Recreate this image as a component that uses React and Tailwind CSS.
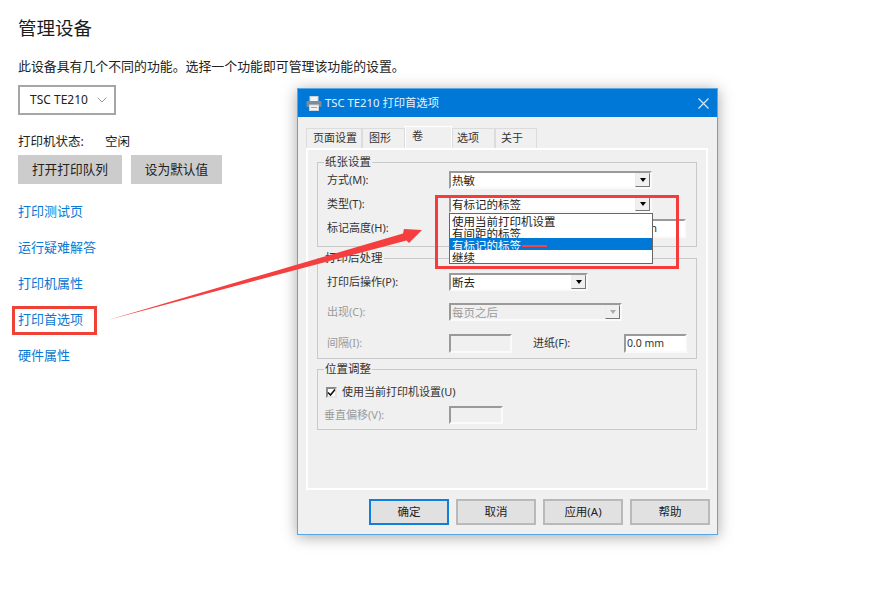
import { ChevronDown } from "lucide-react";

const font = "font-['Noto_Sans','Noto_Sans_CJK_SC',sans-serif]";

const links = ["打印测试页", "运行疑难解答", "打印机属性", "打印首选项", "硬件属性"];

const tabs = [
  { label: "页面设置", w: "w-[56px] pl-[6px]" },
  { label: "图形", w: "w-[43px] pl-[6px]" },
  { label: "卷", w: "w-[47px] pl-[6px]", active: true },
  { label: "选项", w: "w-[43px] pl-[4px]" },
  { label: "关于", w: "w-[42px] pl-[5px]" },
];

function PrinterIcon() {
  return (
    <svg width="16" height="15" viewBox="0 0 16 15">
      <rect x="4" y="0.5" width="8" height="5" fill="#f4f4f4" stroke="#c8d4de" />
      <rect x="0.5" y="5" width="15" height="6" rx="1" fill="#7f8c98" />
      <rect x="3.5" y="9" width="9" height="5.5" fill="#f4f4f4" stroke="#c8d4de" />
      <rect x="5" y="11" width="6" height="1" fill="#9aa7b3" />
    </svg>
  );
}

function Sunken({ className, children }) {
  return (
    <div className={`border-2 border-t-[#9a9a9a] border-l-[#9a9a9a] border-r-[#fafafa] border-b-[#fafafa] ${className}`}>
      {children}
    </div>
  );
}

function Combo({ value, className, disabled }) {
  return (
    <Sunken className={`flex h-[18px] items-center ${disabled ? "bg-[#f0f0f0] text-[#9b9b9b]" : "bg-white text-[#222]"} ${className}`}>
      <span className="flex-1 pl-[1px] pt-[2px] text-[11.5px] leading-none">{value}</span>
      <span className="flex h-[14px] w-[15px] items-center justify-center border border-b-[#777] border-r-[#777] border-t-[#ececec] border-l-[#ececec] bg-[#f0f0f0]">
        <span className={`h-0 w-0 border-x-[3.5px] border-t-[4px] border-x-transparent ${disabled ? "border-t-[#aaa]" : "border-t-black"}`} />
      </span>
    </Sunken>
  );
}

function Row({ label, muted, children, className }) {
  return (
    <div className={`flex items-center ${className}`}>
      <span className={`w-[122px] text-[11px] ${muted ? "text-[#9b9b9b]" : "text-[#333]"}`}>{label}</span>
      {children}
    </div>
  );
}

function Group({ title, className, children }) {
  return (
    <div className={`relative border border-[#c9c9c9] pl-[9px] ${className}`}>
      <span className="absolute -top-[9px] left-[6px] bg-[#f0f0f0] px-[1px] text-[11.5px] leading-[16px] text-[#333]">
        {title}
      </span>
      {children}
    </div>
  );
}

function DialogButton({ children, primary }) {
  return (
    <button className={`h-[26px] w-[80px] bg-[#e1e1e1] text-[11.5px] text-[#222] ${primary ? "border-2 border-[#0f7fdb]" : "border-2 border-[#b9b9b9]"}`}>
      {children}
    </button>
  );
}

function PrintDialog() {
  return (
    <div className="absolute left-[297px] top-[88px] flex h-[447px] w-[421px] flex-col border border-[#5aa7e6] bg-[#f0f0f0] shadow-[0_2px_14px_rgba(0,0,0,0.35)]">
      <div className="flex h-[28px] items-center bg-[#0078d7] pl-[8px] pr-[8px] text-white">
        <PrinterIcon />
        <span className="ml-[3px] flex-1 text-[11.3px] text-[#e8f3fc]">TSC TE210 打印首选项</span>
        <svg width="11" height="11" viewBox="0 0 11 11" stroke="#d5e9f9" strokeWidth="1.2">
          <path d="M0.5 0.5 L10.5 10.5 M10.5 0.5 L0.5 10.5" />
        </svg>
      </div>

      <div className="pl-[8px] pr-[9px] pt-[9px]">
        <div className="flex h-[22px] items-end">
          {tabs.map((t) => (
            <div
              key={t.label}
              className={`flex items-center border border-b-0 text-[11px] text-[#333] ${t.w} ${
                t.active ? "h-[22px] border-white bg-[#f0f0f0] pb-[3px]" : "h-[20px] border-[#dcdcdc] bg-[#f0f0f0]"
              }`}
            >
              {t.label}
            </div>
          ))}
        </div>

        <div className="h-[342px] border-2 border-white px-[9px] pt-[12px]">
          <Group title="纸张设置" className="h-[85px] pt-[8px]">
            <Row label="方式(M):">
              <Combo value="热敏" className="w-[203px]" />
            </Row>
            <Row label="类型(T):" className="mt-[6px]">
              <Combo value="有标记的标签" className="w-[203px]" />
            </Row>
            <Row label="标记高度(H):" className="mt-[6px]">
              <Sunken className="flex h-[19px] w-[237px] items-center justify-end bg-white pr-[27px] text-[11px] text-[#333]">
                mm
              </Sunken>
            </Row>
          </Group>

          <Group title="打印后处理" className="mt-[11px] h-[101px] pt-[14px]">
            <Row label="打印后操作(P):">
              <Combo value="断去" className="w-[139px]" />
            </Row>
            <Row label="出现(C):" muted className="mt-[12px]">
              <Combo value="每页之后" className="w-[173px]" disabled />
            </Row>
            <div className="mt-[13px] flex items-center">
              <span className="w-[122px] text-[11px] text-[#9b9b9b]">间隔(I):</span>
              <Sunken className="h-[19px] w-[63px] bg-[#f0f0f0]" />
              <span className="ml-[21px] w-[91px] text-[11px] text-[#333]">进纸(F):</span>
              <Sunken className="flex h-[19px] w-[63px] items-center bg-white pl-[1px] text-[10.5px] text-[#333]">
                0.0 mm
              </Sunken>
            </div>
          </Group>

          <Group title="位置调整" className="mt-[10px] h-[61px] pt-[14px]">
            <div className="-ml-[1px] flex h-[16px] items-center text-[11px] text-[#333]">
              <span className="flex h-[11px] w-[11px] items-center justify-center border-2 border-t-[#8a8a8a] border-l-[#8a8a8a] border-r-[#e6e6e6] border-b-[#e6e6e6] bg-white">
                <svg width="9" height="9" viewBox="0 0 9 9" fill="none" stroke="#111" strokeWidth="1.6" className="shrink-0">
                  <path d="M1 4.5 L3.5 7 L8 1.5" />
                </svg>
              </span>
              <span className="ml-[5px]">使用当前打印机设置(U)</span>
            </div>
            <div className="-ml-[3px] mt-[6px] flex items-center">
              <span className="w-[125px] text-[11px] text-[#9b9b9b]">垂直偏移(V):</span>
              <Sunken className="h-[18px] w-[54px] bg-[#f0f0f0]" />
            </div>
          </Group>
        </div>

        <div className="-mr-[2px] mt-[9px] flex justify-end gap-[7px]">
          <DialogButton primary>确定</DialogButton>
          <DialogButton>取消</DialogButton>
          <DialogButton>应用(A)</DialogButton>
          <DialogButton>帮助</DialogButton>
        </div>
      </div>

      {/* open list of the type combo */}
      <div className="absolute left-[151px] top-[124px] w-[204px] border border-[#666] bg-white text-[11.5px] leading-[15px] text-[#222]">
        <div className="h-[12px] pl-[2px]">使用当前打印机设置</div>
        <div className="h-[12px] pl-[2px]">有间距的标签</div>
        <div className="relative h-[12px] bg-[#0078d7] pl-[2px] text-white">
          有标记的标签
          <span className="absolute left-[72px] top-[7px] h-[2px] w-[25px] bg-[#f44444]" />
        </div>
        <div className="h-[13px] pl-[2px]">继续</div>
      </div>
    </div>
  );
}

export default function App() {
  return (
    <div className={`relative h-[597px] w-[883px] overflow-hidden bg-white pl-[18px] text-[#222] ${font}`}>
      <h1 className="pt-[14px] text-[18.5px] leading-[28px] text-[#1c1c1c]">管理设备</h1>
      <p className="mt-[14px] text-[12.9px] leading-[20px]">此设备具有几个不同的功能。选择一个功能即可管理该功能的设置。</p>

      <div className="mt-[9px] flex h-[30px] w-[98px] items-center border-2 border-[#a6a6a6] pl-[10px] text-[12px]">
        TSC TE210
        <ChevronDown size={16} strokeWidth={1} className="ml-[6px] text-[#666]" />
      </div>

      <div className="mt-[17px] flex text-[12.5px] leading-[20px]">
        <span className="w-[87px]">打印机状态:</span>
        <span>空闲</span>
      </div>
      <div className="mt-[3px] flex gap-[9px]">
        <button className="h-[29px] w-[104px] bg-[#cccccc] text-[12.7px] text-[#222]">打开打印队列</button>
        <button className="h-[29px] w-[91px] bg-[#cccccc] text-[12.7px] text-[#222]">设为默认值</button>
      </div>

      <div className="mt-[10px] flex flex-col">
        {links.map((l) => (
          <a key={l} className="relative flex h-[36px] items-center text-[13px] text-[#0a78d4]">
            {l}
            {l === "打印首选项" && (
              <span className="absolute -left-[6px] top-[4px] h-[29px] w-[85px] border-[3px] border-[#ef4136]" />
            )}
          </a>
        ))}
      </div>

      <PrintDialog />

      {/* annotations drawn over the screenshot */}
      <div className="absolute left-[435px] top-[195px] h-[74px] w-[244px] border-[3px] border-[#f53b3b]" />
      <svg className="absolute left-0 top-0" width="883" height="597" viewBox="0 0 883 597">
        <polygon points="108,320 403,233.5 404,229 422,230 409,243 406.5,240.5" fill="#f53f3f" />
      </svg>
    </div>
  );
}
